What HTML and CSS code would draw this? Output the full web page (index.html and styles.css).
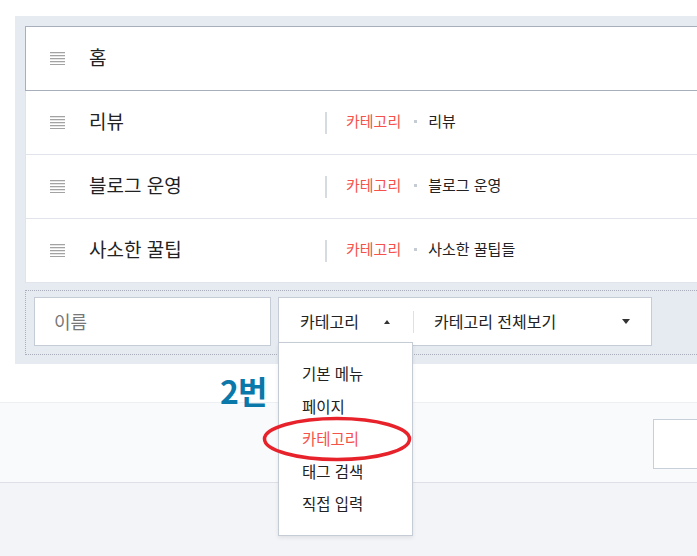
FILE: index.html
```html
<!DOCTYPE html>
<html lang="ko">
<head>
<meta charset="utf-8">
<link rel="stylesheet" href="styles.css">
</head>
<body>
<div class="top"></div>
<div class="panel">
  <div class="list">
    <div class="row active"><span class="handle"></span><span class="name">홈</span></div>
    <div class="row"><span class="handle"></span><span class="name">리뷰</span><span class="meta"><span class="sep"></span><span class="type">카테고리</span><span class="dot"></span><span class="target">리뷰</span></span></div>
    <div class="row"><span class="handle"></span><span class="name">블로그 운영</span><span class="meta"><span class="sep"></span><span class="type">카테고리</span><span class="dot"></span><span class="target">블로그 운영</span></span></div>
    <div class="row"><span class="handle"></span><span class="name">사소한 꿀팁</span><span class="meta"><span class="sep"></span><span class="type">카테고리</span><span class="dot"></span><span class="target">사소한 꿀팁들</span></span></div>
  </div>
  <div class="form">
    <div class="input">이름</div>
    <div class="select">
      <div class="sel-type"><span>카테고리</span><span class="tri up"></span></div>
      <div class="sel-div"></div>
      <div class="sel-target"><span>카테고리 전체보기</span><span class="tri down"></span></div>
    </div>
  </div>
</div>
<div class="gap"></div>
<div class="footer-area"><div class="white-box"></div></div>
<div class="rest"></div>

<ul class="dropdown">
  <li>기본 메뉴</li>
  <li>페이지</li>
  <li class="on">카테고리</li>
  <li>태그 검색</li>
  <li>직접 입력</li>
</ul>
<div class="note">2번</div>
<svg class="circle" width="152" height="48" viewBox="0 0 152 48"><ellipse cx="76" cy="24" rx="72.5" ry="20.5" fill="none" stroke="#e8222a" stroke-width="3.5"/></svg>
</body>
</html>
```
FILE: styles.css
```css
html, body {
  margin: 0;
  padding: 0;
  overflow: hidden;
  background: #ffffff;
  font-family: "Noto Sans CJK KR", "Noto Sans", sans-serif;
  color: #222;
}
body { position: relative; width: 697px; height: 556px; }
.top { height: 16px; }
.panel {
  margin-left: 15px;
  background: #e6eaf1;
  padding: 10px 0 9px 10px;
}
.list { background: #fff; }
.row {
  display: flex;
  align-items: center;
  height: 63px;
  border-left: 1px solid #dfe3ea;
  border-bottom: 1px solid #e1e4ea;
  padding-left: 24px;
}
.row.active {
  border: 1px solid #a6afba;
  border-right: none;
}
.handle {
  width: 15px;
  height: 13px;
  background: repeating-linear-gradient(#a3a3a3 0 1px, #e6e6e6 1px 2px, transparent 2px 3px);
  margin-right: 24px;
  flex: none;
}
.name {
  width: 236px;
  font-size: 19px;
  line-height: 24px;
  padding-bottom: 4px;
  color: #222;
}
.meta { display: flex; align-items: center; font-size: 15px; }
.sep {
  width: 2px;
  height: 22px;
  background: #d6dbe2;
  margin-right: 19px;
}
.type, .target { line-height: 20px; padding-bottom: 3px; }
.type { color: #f5524b; }
.dot {
  width: 3px;
  height: 3px;
  background: #c6ccd4;
  margin: 0 11px 2px 13px;
}
.target { color: #222; }
.form {
  margin-top: 7px;
  border: 1px dotted #a8afba;
  border-right: none;
  padding: 6px 8px 8px 8px;
  display: flex;
}
.input {
  box-sizing: border-box;
  width: 237px;
  height: 49px;
  border: 1px solid #c6ccd6;
  background: #fff;
  padding-left: 19px;
  padding-bottom: 2px;
  font-size: 18px;
  color: #777;
  display: flex;
  align-items: center;
}
.select {
  box-sizing: border-box;
  margin-left: 7px;
  width: 374px;
  height: 49px;
  border: 1px solid #c6ccd6;
  background: #fff;
  display: flex;
  align-items: center;
  font-size: 16px;
  color: #222;
}
.sel-type {
  box-sizing: border-box;
  width: 134px;
  padding: 0 23px 0 21px;
  display: flex;
  justify-content: space-between;
  align-items: center;
}
.sel-div { width: 1px; height: 22px; background: #dde1e7; }
.sel-target {
  flex: 1;
  padding: 0 21px 0 20px;
  display: flex;
  justify-content: space-between;
  align-items: center;
}
.sel-type span:first-child, .sel-target span:first-child { padding-bottom: 2px; }
.tri { width: 0; height: 0; border-style: solid; }
.tri.up { border-width: 0 3px 4px 3px; border-color: transparent transparent #333 transparent; }
.tri.down { border-width: 5px 4px 0 4px; border-color: #333 transparent transparent transparent; }
.gap { height: 38px; }
.footer-area {
  height: 81px;
  border-top: 1px solid #edf0f3;
  border-bottom: 1px solid #dde1e7;
  background: #f9fafc;
  padding-top: 16px;
  box-sizing: border-box;
  padding-left: 653px;
}
.white-box {
  width: 100px;
  height: 50px;
  box-sizing: border-box;
  border: 1px solid #c9cfd8;
  background: #fff;
}
.rest { height: 80px; background: #f3f4f7; }
.dropdown {
  position: absolute;
  left: 278px;
  top: 342px;
  box-sizing: border-box;
  width: 135px;
  height: 194px;
  margin: 0;
  padding: 14px 0 0 23px;
  list-style: none;
  background: #fff;
  border: 1px solid #c5ccd6;
  box-shadow: 0 2px 4px rgba(0,0,0,0.08);
  font-size: 15.5px;
  color: #222;
}
.dropdown li { height: 32.5px; line-height: 32.5px; }
.dropdown li.on { color: #f5524b; }
.note {
  position: absolute;
  left: 220px;
  top: 370px;
  font-size: 32px;
  line-height: 40px;
  font-weight: 700;
  color: #0b78aa;
  letter-spacing: -1px;
}
.circle { position: absolute; left: 261px; top: 415px; }
```
